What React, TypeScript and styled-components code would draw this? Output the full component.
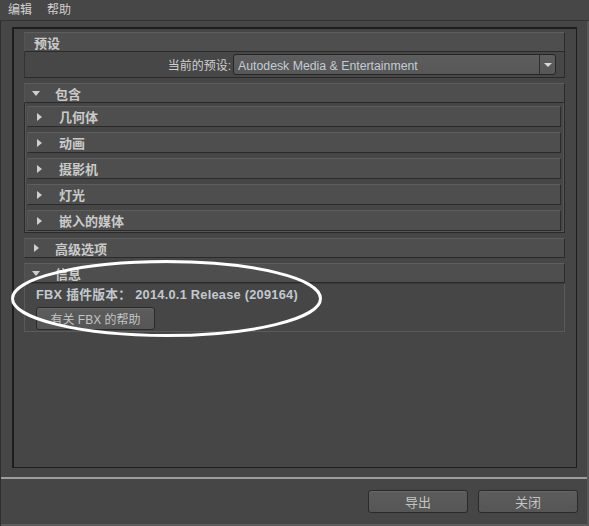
import React from "react";
import styled, { createGlobalStyle } from "styled-components";

const Global = createGlobalStyle`
  html, body { margin: 0; padding: 0; background: #464646; }
  * { box-sizing: border-box; }
`;

const FONT = `"Liberation Sans", "Noto Sans CJK SC", sans-serif`;

const Window = styled.div`
  position: relative;
  width: 589px;
  height: 526px;
  background: #464646;
  display: flex;
  flex-direction: column;
  font-family: ${FONT};
  color: #c8c8c8;
  overflow: hidden;
`;

const MenuBar = styled.div`
  height: 21px;
  display: flex;
  align-items: center;
  gap: 15px;
  padding: 0 0 1px 8px;
  background: #474747;
  border-bottom: 1px solid #333333;
  font-size: 12px;
  color: #d2d2d2;
`;

const MenuItem = styled.span`
  line-height: 20px;
`;

const Body = styled.div`
  flex: 1;
  display: flex;
  flex-direction: column;
  border-left: 1px solid #2e2e2e;
  border-right: 2px solid #585858;
`;

const Main = styled.div`
  flex: 1;
  display: flex;
  padding: 6px 10px 9px 11px;
`;

const Panel = styled.div`
  flex: 1;
  display: flex;
  flex-direction: column;
  border: 1px solid #1e1e1e;
  border-top-width: 2px;
  border-left-width: 2px;
  padding: 3px 11px 0 10px;
  background: #464646;
`;

const Header = styled.div<{ $mt?: number }>`
  height: 20px;
  margin-top: ${(p) => p.$mt ?? 0}px;
  display: flex;
  align-items: center;
  background: #4e4e4e;
  border-top: 1px solid #5e5e5e;
  border-left: 1px solid #555555;
  border-bottom: 1px solid #2a2a2a;
  border-right: 1px solid #2a2a2a;
  font-size: 13px;
  font-weight: bold;
  color: #cacaca;
`;

const ArrowSlot = styled.span`
  width: 30px;
  display: flex;
  justify-content: flex-start;
  align-items: center;
  padding-left: 7px;
  flex: none;
`;

const DownArrow = styled.span`
  width: 0;
  height: 0;
  border-left: 4px solid transparent;
  border-right: 4px solid transparent;
  border-top: 5px solid #cfcfcf;
`;

const RightArrow = styled.span`
  margin-left: 2px;
  width: 0;
  height: 0;
  border-top: 4px solid transparent;
  border-bottom: 4px solid transparent;
  border-left: 5px solid #cfcfcf;
`;

const HeaderText = styled.span<{ $pl?: number }>`
  padding-left: ${(p) => p.$pl ?? 0}px;
`;

const PresetRow = styled.div`
  height: 26px;
  display: flex;
  align-items: center;
  justify-content: flex-end;
  gap: 2px;
  padding-right: 8px;
  background: #474747;
  border-left: 1px solid #333333;
  border-right: 1px solid #2a2a2a;
  border-bottom: 1px solid #2a2a2a;
  font-size: 12px;
  color: #d0d0d0;
`;

const Select = styled.div`
  width: 323px;
  height: 21px;
  display: flex;
  align-items: stretch;
  border: 1px solid #262626;
  border-radius: 3px;
  background: linear-gradient(#5d5d5d, #575757);
  overflow: hidden;
`;

const SelectText = styled.span`
  flex: 1;
  display: flex;
  align-items: center;
  padding: 3px 0 0 4px;
  font-size: 12.3px;
  color: #c3ccd6;
`;

const SelectButton = styled.span`
  width: 16px;
  display: flex;
  align-items: center;
  justify-content: center;
  border-left: 1px solid #2e2e2e;
`;

const SmallDown = styled.span`
  width: 0;
  height: 0;
  border-left: 4px solid transparent;
  border-right: 4px solid transparent;
  border-top: 4px solid #d8d8d8;
`;

const Group = styled.div`
  display: flex;
  flex-direction: column;
  gap: 5px;
  padding: 3px 3px 2px 2px;
  border-left: 1px solid #2a2a2a;
  border-right: 1px solid #2a2a2a;
  border-bottom: 1px solid #2a2a2a;
  box-shadow: inset 1px 0 0 #575757, inset -1px 0 0 #575757, inset 0 -1px 0 #575757;
  height: 130px;
`;

const SubItem = styled.div`
  height: 21px;
  display: flex;
  align-items: center;
  background: #4e4e4e;
  border-top: 1px solid #5e5e5e;
  border-left: 1px solid #555555;
  border-bottom: 1px solid #2a2a2a;
  border-right: 1px solid #2a2a2a;
  font-size: 13px;
  font-weight: bold;
  color: #cacaca;
`;

const SubArrowSlot = styled.span`
  width: 31px;
  padding-left: 7px;
  display: flex;
  align-items: center;
  flex: none;
`;

const InfoBox = styled.div`
  height: 49px;
  display: flex;
  flex-direction: column;
  gap: 4px;
  padding: 3px 0 0 11px;
  border: 1px solid #5a5a5a;
  border-top-color: #3a3a3a;
`;

const InfoText = styled.div`
  font-size: 12.8px;
  font-weight: bold;
  letter-spacing: 0.25px;
  color: #c2c8ce;
  line-height: 16px;
`;

const Button = styled.button<{ $w: number; $fs?: number }>`
  width: ${(p) => p.$w}px;
  height: 23px;
  padding: 0;
  border: 1px solid #2a2a2a;
  border-radius: 3px;
  background: linear-gradient(#5c5c5c, #565656);
  box-shadow: inset 0 1px 0 #666666;
  color: #c4c4c4;
  font-family: ${FONT};
  font-size: ${(p) => p.$fs ?? 13}px;
  cursor: default;
`;

const Footer = styled.div`
  height: 49px;
  display: flex;
  justify-content: flex-end;
  align-items: flex-start;
  gap: 10px;
  padding: 11px 9px 0 0;
  border-top: 2px solid #9c9c9c;
  border-bottom: 2px solid #5c5c5c;
`;

const Overlay = styled.svg`
  position: absolute;
  left: 0;
  top: 0;
  pointer-events: none;
`;

const includes = ["几何体", "动画", "摄影机", "灯光", "嵌入的媒体"];

export default function App() {
  return (
    <>
      <Global />
      <Window>
        <MenuBar>
          <MenuItem>编辑</MenuItem>
          <MenuItem>帮助</MenuItem>
        </MenuBar>
        <Body>
          <Main>
            <Panel>
              <Header>
                <HeaderText $pl={9}>预设</HeaderText>
              </Header>
              <PresetRow>
                <span>当前的预设:</span>
                <Select>
                  <SelectText>Autodesk Media &amp; Entertainment</SelectText>
                  <SelectButton>
                    <SmallDown />
                  </SelectButton>
                </Select>
              </PresetRow>
              <Header $mt={5}>
                <ArrowSlot>
                  <DownArrow />
                </ArrowSlot>
                <HeaderText>包含</HeaderText>
              </Header>
              <Group>
                {includes.map((t) => (
                  <SubItem key={t}>
                    <SubArrowSlot>
                      <RightArrow />
                    </SubArrowSlot>
                    <span>{t}</span>
                  </SubItem>
                ))}
              </Group>
              <Header $mt={5}>
                <ArrowSlot>
                  <RightArrow />
                </ArrowSlot>
                <HeaderText>高级选项</HeaderText>
              </Header>
              <Header $mt={5}>
                <ArrowSlot>
                  <DownArrow />
                </ArrowSlot>
                <HeaderText>信息</HeaderText>
              </Header>
              <InfoBox>
                <InfoText>FBX 插件版本： 2014.0.1 Release (209164)</InfoText>
                <Button $w={119} $fs={12}>有关 FBX 的帮助</Button>
              </InfoBox>
            </Panel>
          </Main>
          <Footer>
            <Button $w={100}>导出</Button>
            <Button $w={100}>关闭</Button>
          </Footer>
        </Body>
        <Overlay width="589" height="526" viewBox="0 0 589 526">
          <ellipse cx="166.5" cy="298.5" rx="154" ry="37" fill="none" stroke="#ffffff" strokeWidth="3" />
        </Overlay>
      </Window>
    </>
  );
}
